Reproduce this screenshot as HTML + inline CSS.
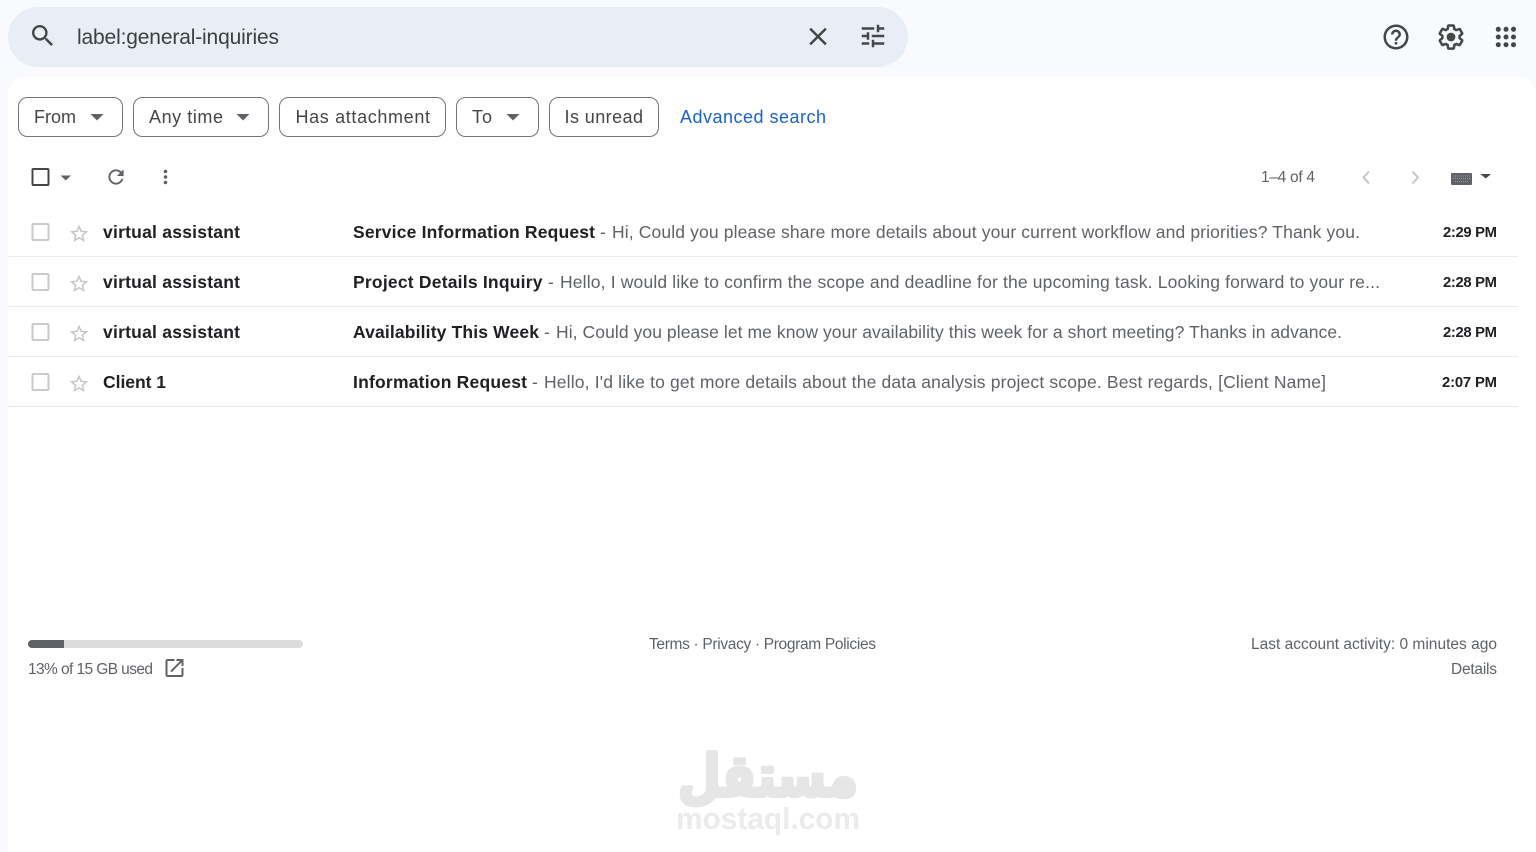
<!DOCTYPE html>
<html lang="en">
<head>
<meta charset="utf-8">
<title>Gmail search</title>
<style>
html,body{margin:0;padding:0;width:1536px;height:852px;overflow:hidden;background:#f8fafd}
svg{display:block;position:absolute;left:0;top:0}
text{font-family:"Liberation Sans",sans-serif}
.chip{fill:#fff;stroke:#747775;stroke-width:1}
.ct{font-size:18px;fill:#444746}
.b{font-size:17.5px;font-weight:bold;fill:#202124}
.s{font-size:17.5px;fill:#5f6368}
.t{font-size:14.8px;font-weight:bold;fill:#202124}
.f{font-size:15.5px;fill:#5f6368}
.line{stroke:#e8eaed;stroke-width:1}
.cb{fill:none;stroke:#c8cacb;stroke-width:2}
.star{fill:#c4c7c5}
.ic{fill:#444746}
</style>
</head>
<body>
<svg width="1536" height="852" viewBox="0 0 1536 852" xmlns="http://www.w3.org/2000/svg">
  <defs>
    <path id="star" d="M22 9.24l-7.19-.62L12 2 9.19 8.63 2 9.24l5.46 4.73L5.82 21 12 17.27 18.18 21l-1.63-7.03L22 9.24zM12 15.4l-3.76 2.27 1-4.28-3.32-2.88 4.38-.38L12 6.1l1.71 4.04 4.38.38-3.32 2.88 1 4.28L12 15.4z"/>
  </defs>

  <!-- search bar -->
  <rect x="8" y="7" width="900" height="60" rx="30" fill="#e9eef6"/>
  <path class="ic" transform="translate(28.4 21.4) scale(1.2)" d="M15.5 14h-.79l-.28-.27C15.41 12.59 16 11.11 16 9.5 16 5.91 13.09 3 9.5 3S3 5.91 3 9.5 5.91 16 9.5 16c1.61 0 3.09-.59 4.23-1.57l.27.28v.79l5 4.99L20.49 19l-4.99-5zm-6 0C7.01 14 5 11.99 5 9.5S7.01 5 9.5 5 14 7.01 14 9.5 11.99 14 9.5 14z"/>
  <text x="77" y="44" font-size="21" fill="#3c4043" textLength="202">label:general-inquiries</text>
  <path class="ic" transform="translate(803 21.5) scale(1.25)" d="M19 6.41L17.59 5 12 10.59 6.41 5 5 6.41 10.59 12 5 17.59 6.41 19 12 13.41 17.59 19 19 17.59 13.41 12z"/>
  <path class="ic" transform="translate(858 21) scale(1.25)" d="M3 17v2h6v-2H3zM3 5v2h10V5H3zm10 16v-2h8v-2h-8v-2h-2v6h2zM7 9v2H3v2h4v2h2V9H7zm14 4v-2H11v2h10zm-6-4h2V7h4V5h-4V3h-2v6z"/>

  <!-- top right icons -->
  <path class="ic" transform="translate(1381 22) scale(1.25)" d="M11 18h2v-2h-2v2zm1-16C6.48 2 2 6.48 2 12s4.48 10 10 10 10-4.48 10-10S17.52 2 12 2zm0 18c-4.41 0-8-3.59-8-8s3.59-8 8-8 8 3.59 8 8-3.59 8-8 8zm0-14c-2.21 0-4 1.79-4 4h2c0-1.1.9-2 2-2s2 .9 2 2c0 2-3 1.75-3 5h2c0-2.25 3-2.5 3-5 0-2.21-1.79-4-4-4z"/>
  <g class="ic" transform="translate(1436 22) scale(1.25)">
    <path d="M13.85 22.25h-3.7c-.74 0-1.36-.54-1.45-1.27l-.27-1.89c-.27-.14-.53-.29-.79-.46l-1.8.72c-.7.26-1.47-.03-1.81-.65L2.2 15.53c-.35-.66-.2-1.44.36-1.88l1.53-1.19c-.01-.15-.02-.3-.02-.46 0-.15.01-.31.02-.46l-1.52-1.19c-.59-.45-.74-1.26-.37-1.88l1.85-3.19c.34-.62 1.11-.9 1.79-.63l1.81.73c.26-.17.52-.32.78-.46l.27-1.91c.09-.7.71-1.25 1.44-1.25h3.7c.74 0 1.36.54 1.45 1.27l.27 1.89c.27.14.53.29.79.46l1.8-.72c.71-.26 1.48.03 1.82.65l1.84 3.18c.36.66.2 1.44-.36 1.88l-1.52 1.19c.01.15.02.3.02.46s-.01.31-.02.46l1.52 1.19c.56.45.72 1.23.37 1.86l-1.86 3.22c-.34.62-1.11.9-1.8.63l-1.8-.72c-.26.17-.52.32-.78.46l-.27 1.91c-.1.68-.72 1.22-1.46 1.22zm-3.23-2h2.76l.37-2.55.53-.22c.44-.18.88-.44 1.34-.78l.45-.34 2.38.96 1.38-2.4-2.03-1.58.07-.56c.03-.26.06-.51.06-.78s-.03-.53-.06-.78l-.07-.56 2.03-1.58-1.39-2.4-2.39.96-.45-.35c-.42-.32-.87-.58-1.33-.77l-.52-.22-.37-2.55h-2.76l-.37 2.55-.53.21c-.44.19-.88.44-1.34.79l-.45.33-2.38-.95-1.39 2.39 2.03 1.58-.07.56a7 7 0 0 0-.06.79c0 .26.02.53.06.78l.07.56-2.03 1.58 1.38 2.4 2.39-.96.45.35c.43.33.86.58 1.33.77l.53.22.38 2.55z"/>
    <circle cx="12" cy="12" r="3.5"/>
  </g>
  <g class="ic">
    <circle cx="1498.3" cy="29.3" r="2.5"/><circle cx="1506" cy="29.3" r="2.5"/><circle cx="1513.5" cy="29.3" r="2.5"/>
    <circle cx="1498.3" cy="37" r="2.5"/><circle cx="1506" cy="37" r="2.5"/><circle cx="1513.5" cy="37" r="2.5"/>
    <circle cx="1498.3" cy="44.7" r="2.5"/><circle cx="1506" cy="44.7" r="2.5"/><circle cx="1513.5" cy="44.7" r="2.5"/>
  </g>

  <!-- main panel -->
  <path d="M8 852V93a16 16 0 0 1 16-16H1520a16 16 0 0 1 16 16V852z" fill="#fff"/>

  <!-- chips -->
  <rect class="chip" x="18.5" y="97.5" width="104" height="39" rx="9"/>
  <text class="ct" x="34" y="123" textLength="42">From</text>
  <path d="M90.5 114h13l-6.5 6.500z" fill="#5f6368"/>

  <rect class="chip" x="133.5" y="97.5" width="135" height="39" rx="9"/>
  <text class="ct" x="149" y="123" textLength="74">Any time</text>
  <path d="M236.5 114h13l-6.5 6.500z" fill="#5f6368"/>

  <rect class="chip" x="279.5" y="97.5" width="166" height="39" rx="9"/>
  <text class="ct" x="295.5" y="123" textLength="134.5">Has attachment</text>

  <rect class="chip" x="456.5" y="97.5" width="82" height="39" rx="9"/>
  <text class="ct" x="472" y="123" textLength="20">To</text>
  <path d="M506.5 114h13l-6.5 6.500z" fill="#5f6368"/>

  <rect class="chip" x="549.5" y="97.5" width="109" height="39" rx="9"/>
  <text class="ct" x="564.5" y="123" textLength="78.5">Is unread</text>

  <text x="680" y="123" font-size="18" fill="#1a62d6" textLength="146">Advanced search</text>

  <!-- toolbar -->
  <rect x="32.5" y="169" width="16" height="16" rx="1" fill="none" stroke="#444746" stroke-width="2"/>
  <path d="M60.5 175.500h10.500l-5.250 5z" fill="#5f6368"/>
  <path fill="#5f6368" transform="translate(104.600 165.600) scale(.95)" d="M17.650 6.350C16.200 4.900 14.210 4 12 4c-4.420 0-7.990 3.580-7.990 8s3.570 8 7.990 8c3.730 0 6.840-2.550 7.730-6h-2.080c-.82 2.330-3.040 4-5.650 4-3.310 0-6-2.690-6-6s2.690-6 6-6c1.660 0 3.140.69 4.220 1.780L13 11h7V4l-2.350 2.350z"/>
  <g fill="#5f6368"><circle cx="165.500" cy="171.500" r="1.800"/><circle cx="165.500" cy="177" r="1.800"/><circle cx="165.500" cy="182.500" r="1.800"/></g>

  <text class="f" x="1261" y="182" textLength="54">1–4 of 4</text>
  <path d="M1369 171.500l-5.500 6 5.500 6" fill="none" stroke="#c4c7c5" stroke-width="2"/>
  <path d="M1412.500 171.500l5.500 6-5.500 6" fill="none" stroke="#c4c7c5" stroke-width="2"/>
  <rect x="1451" y="173" width="21" height="12" rx="1" fill="#5f6368"/>
  <path d="M1453 176h17M1453 178.500h17M1455 181.500h13" stroke="#9a9ca0" stroke-width="1" stroke-dasharray="1 1"/>
  <path class="ic" d="M1480.500 174h10.500l-5.250 4.500z"/>

  <!-- rows -->
  <g>
    <rect class="cb" x="32.5" y="224" width="16" height="16" rx="1"/>
    <use href="#star" class="star" transform="translate(68 222.700) scale(.92)"/>
    <text class="b" x="103" y="238" textLength="137">virtual assistant</text>
    <text class="b" x="353" y="238" textLength="242">Service Information Request</text>
    <text class="s" x="600" y="238">-</text>
    <text class="s" x="612" y="238" textLength="748">Hi, Could you please share more details about your current workflow and priorities? Thank you.</text>
    <text class="t" x="1443" y="237" textLength="54">2:29 PM</text>
    <line class="line" x1="8" y1="256.5" x2="1518" y2="256.5"/>
  </g>
  <g>
    <rect class="cb" x="32.5" y="274" width="16" height="16" rx="1"/>
    <use href="#star" class="star" transform="translate(68 272.700) scale(.92)"/>
    <text class="b" x="103" y="288" textLength="137">virtual assistant</text>
    <text class="b" x="353" y="288" textLength="189.500">Project Details Inquiry</text>
    <text class="s" x="548" y="288">-</text>
    <text class="s" x="560" y="288" textLength="820">Hello, I would like to confirm the scope and deadline for the upcoming task. Looking forward to your re...</text>
    <text class="t" x="1443" y="287" textLength="54">2:28 PM</text>
    <line class="line" x1="8" y1="306.5" x2="1518" y2="306.5"/>
  </g>
  <g>
    <rect class="cb" x="32.5" y="324" width="16" height="16" rx="1"/>
    <use href="#star" class="star" transform="translate(68 322.700) scale(.92)"/>
    <text class="b" x="103" y="338" textLength="137">virtual assistant</text>
    <text class="b" x="353" y="338" textLength="186">Availability This Week</text>
    <text class="s" x="544" y="338">-</text>
    <text class="s" x="556" y="338" textLength="786">Hi, Could you please let me know your availability this week for a short meeting? Thanks in advance.</text>
    <text class="t" x="1443" y="337" textLength="54">2:28 PM</text>
    <line class="line" x1="8" y1="356.5" x2="1518" y2="356.5"/>
  </g>
  <g>
    <rect class="cb" x="32.5" y="374" width="16" height="16" rx="1"/>
    <use href="#star" class="star" transform="translate(68 372.700) scale(.92)"/>
    <text class="b" x="103" y="388" textLength="63">Client 1</text>
    <text class="b" x="353" y="388" textLength="174">Information Request</text>
    <text class="s" x="532" y="388">-</text>
    <text class="s" x="544" y="388" textLength="782">Hello, I'd like to get more details about the data analysis project scope. Best regards, [Client Name]</text>
    <text class="t" x="1442" y="387" textLength="55">2:07 PM</text>
    <line class="line" x1="8" y1="406.5" x2="1518" y2="406.5"/>
  </g>

  <!-- footer -->
  <rect x="28" y="640" width="275" height="8" rx="4" fill="#dcdcdc"/>
  <path d="M32 640h32v8H32a4 4 0 0 1 0-8z" fill="#5f6368"/>
  <text class="f" x="28" y="674" textLength="125">13% of 15 GB used</text>
  <path fill="#5f6368" transform="translate(162.500 656) scale(1)" d="M19 19H5V5h7V3H5c-1.110 0-2 .9-2 2v14c0 1.100.89 2 2 2h14c1.100 0 2-.9 2-2v-7h-2v7zM14 3v2h3.590l-9.830 9.830 1.410 1.410L19 6.410V10h2V3h-7z"/>
  <text class="f" x="649" y="649" textLength="227">Terms · Privacy · Program Policies</text>
  <text class="f" x="1251" y="649" textLength="246">Last account activity: 0 minutes ago</text>
  <text class="f" x="1451" y="674" textLength="46">Details</text>

  <!-- watermark -->
  <text x="678" y="796" font-size="58" font-weight="bold" fill="#e6e6e6" stroke="#e6e6e6" stroke-width="4" stroke-linejoin="round" style='font-family:"DejaVu Sans",sans-serif' textLength="180" lengthAdjust="spacingAndGlyphs">مستقل</text>
  <text x="676" y="829" font-size="31" font-weight="bold" fill="#ebebeb" textLength="184" lengthAdjust="spacingAndGlyphs">mostaql.com</text>
</svg>
</body>
</html>
